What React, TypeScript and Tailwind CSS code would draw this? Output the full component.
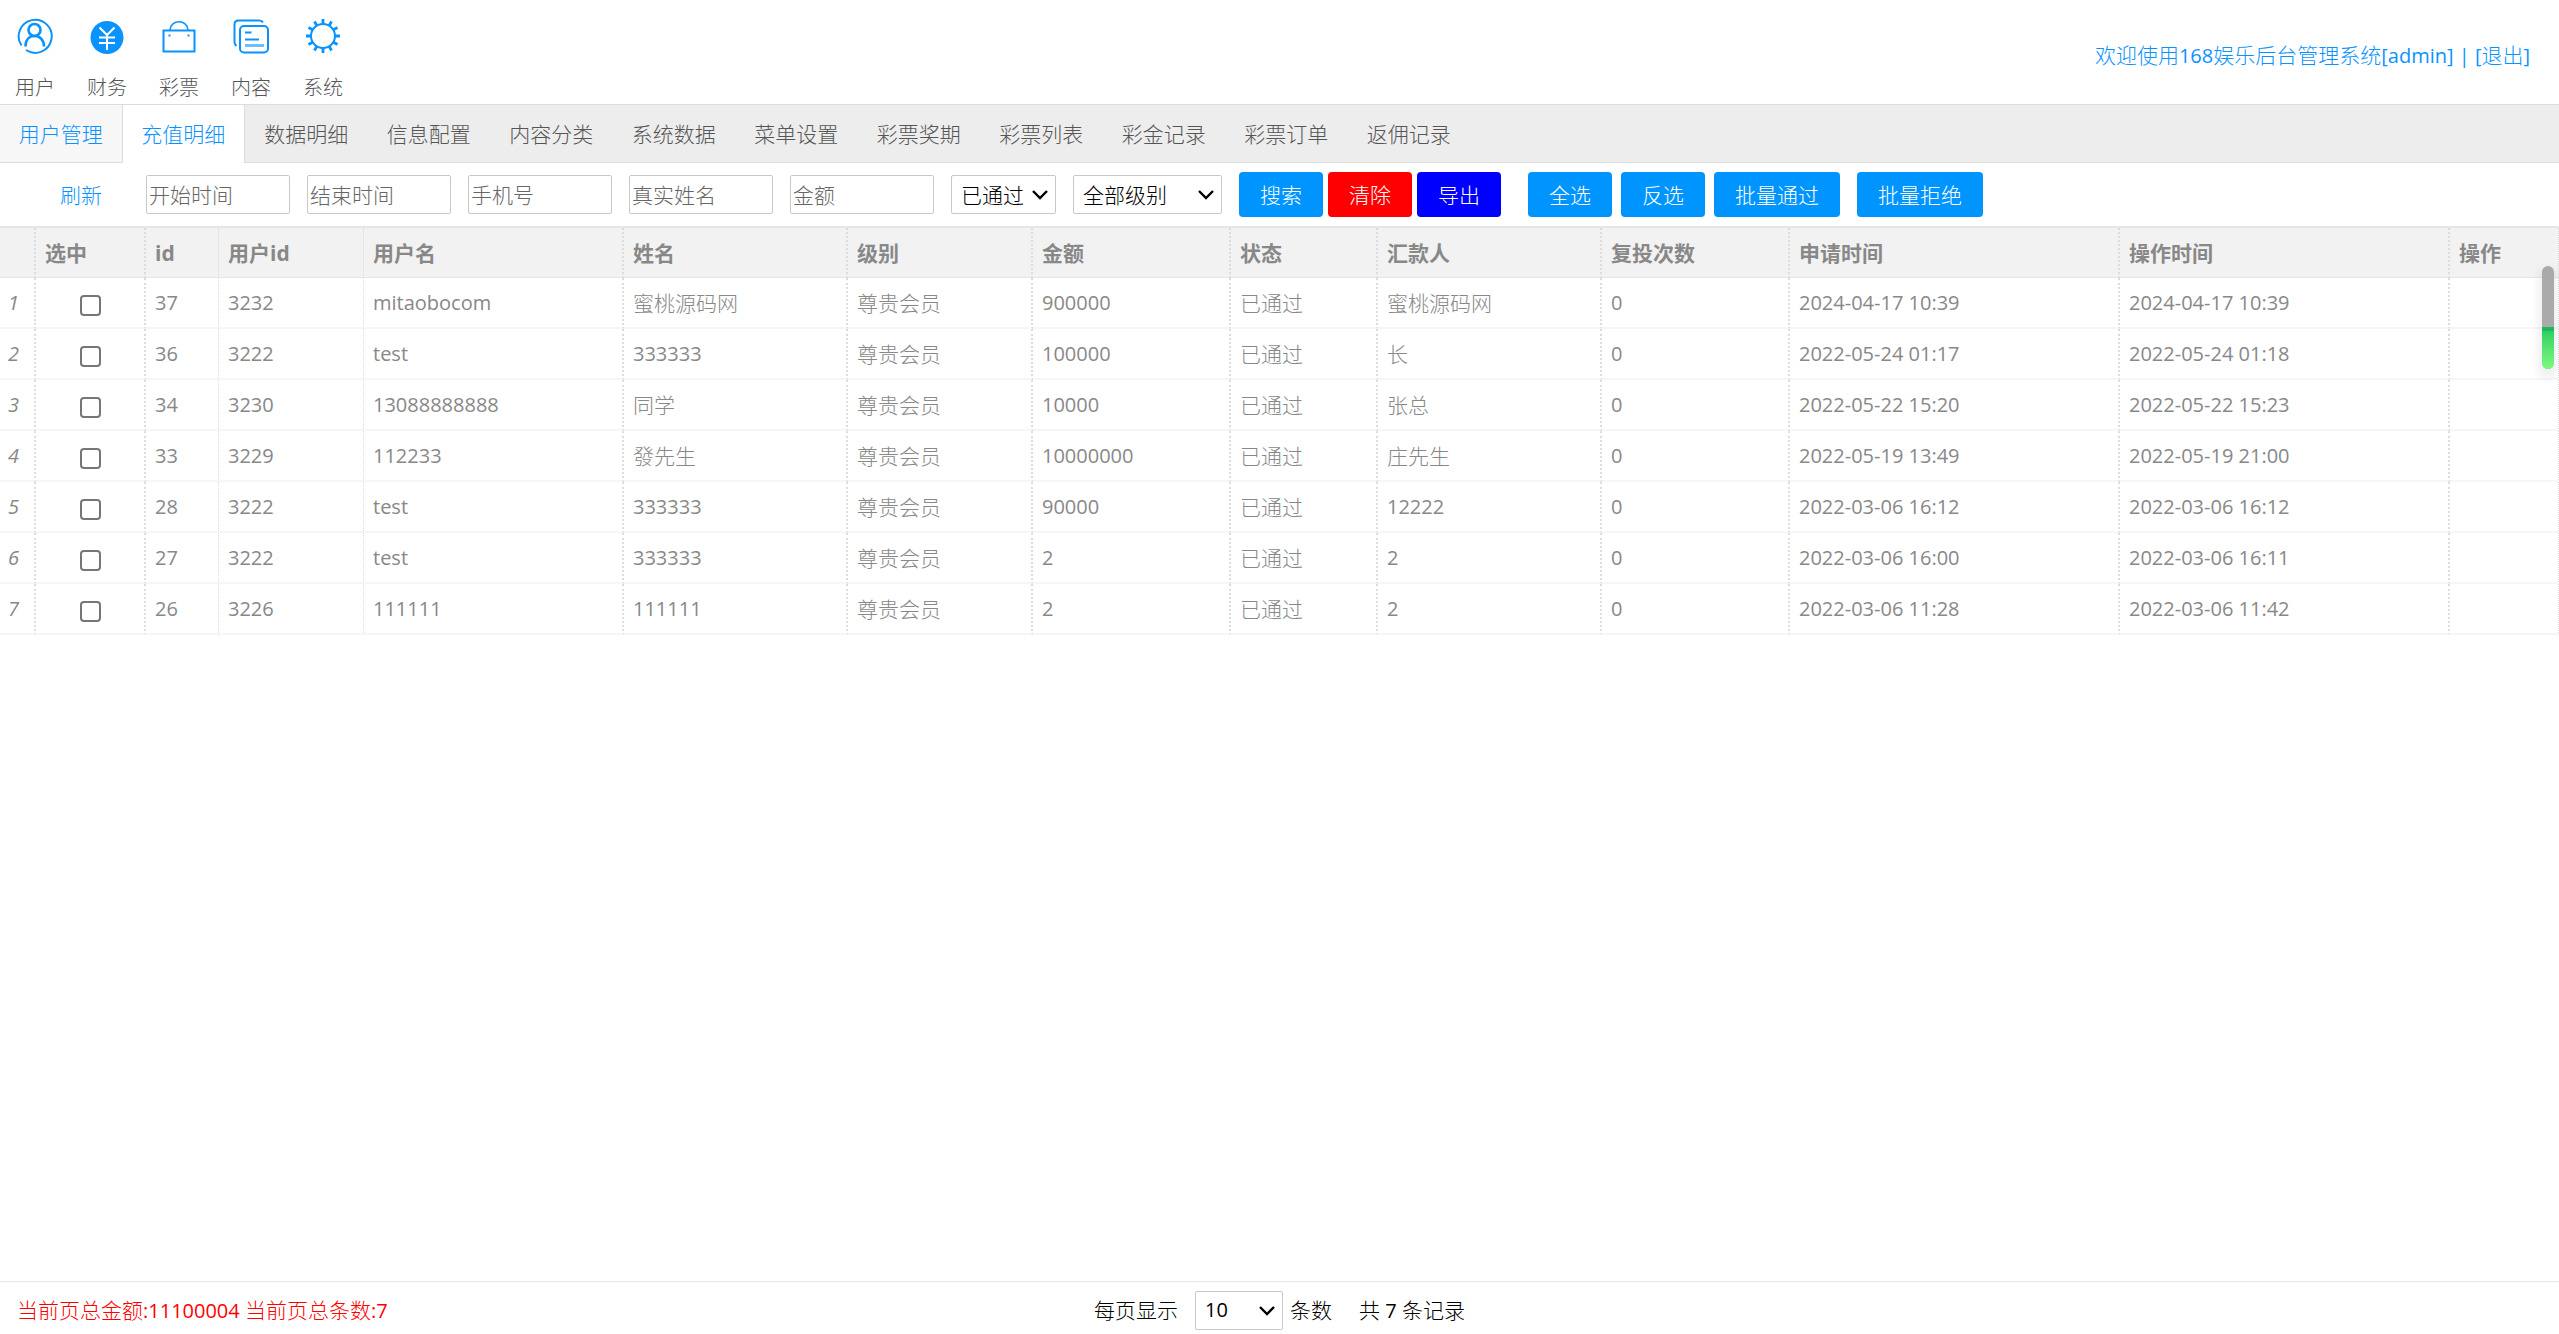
import { useState } from "react";

const NAV_ITEMS = ["用户", "财务", "彩票", "内容", "系统"];

const TABS = [
  "用户管理",
  "充值明细",
  "数据明细",
  "信息配置",
  "内容分类",
  "系统数据",
  "菜单设置",
  "彩票奖期",
  "彩票列表",
  "彩金记录",
  "彩票订单",
  "返佣记录",
];

const FILTERS = ["开始时间", "结束时间", "手机号", "真实姓名", "金额"];

type Column = {
  title: string;
  width: string;
  border: string;
};

const COLUMNS: Column[] = [
  { title: "选中", width: "w-[110px]", border: "border-r-2" },
  { title: "id", width: "w-[73px]", border: "border-r" },
  { title: "用户id", width: "w-[145px]", border: "border-r" },
  { title: "用户名", width: "w-[260px]", border: "border-r-2" },
  { title: "姓名", width: "w-[224px]", border: "border-r-2" },
  { title: "级别", width: "w-[185px]", border: "border-r-2" },
  { title: "金额", width: "w-[198px]", border: "border-r-2" },
  { title: "状态", width: "w-[147px]", border: "border-r-2" },
  { title: "汇款人", width: "w-[224px]", border: "border-r-2" },
  { title: "复投次数", width: "w-[188px]", border: "border-r-2" },
  { title: "申请时间", width: "w-[330px]", border: "border-r-2" },
  { title: "操作时间", width: "w-[330px]", border: "border-r-2" },
  { title: "操作", width: "", border: "border-r" },
];

// id, user id, username, name, level, amount, status, payer, times, applied, handled, actions
const ROWS: string[][] = [
  ["37", "3232", "mitaobocom", "蜜桃源码网", "尊贵会员", "900000", "已通过", "蜜桃源码网", "0", "2024-04-17 10:39", "2024-04-17 10:39", ""],
  ["36", "3222", "test", "333333", "尊贵会员", "100000", "已通过", "长", "0", "2022-05-24 01:17", "2022-05-24 01:18", ""],
  ["34", "3230", "13088888888", "同学", "尊贵会员", "10000", "已通过", "张总", "0", "2022-05-22 15:20", "2022-05-22 15:23", ""],
  ["33", "3229", "112233", "發先生", "尊贵会员", "10000000", "已通过", "庄先生", "0", "2022-05-19 13:49", "2022-05-19 21:00", ""],
  ["28", "3222", "test", "333333", "尊贵会员", "90000", "已通过", "12222", "0", "2022-03-06 16:12", "2022-03-06 16:12", ""],
  ["27", "3222", "test", "333333", "尊贵会员", "2", "已通过", "2", "0", "2022-03-06 16:00", "2022-03-06 16:11", ""],
  ["26", "3226", "111111", "111111", "尊贵会员", "2", "已通过", "2", "0", "2022-03-06 11:28", "2022-03-06 11:42", ""],
];

// Chinese cells are set a little larger and thinner than the numeric ones
function cellText(cell: string) {
  return /[\u4e00-\u9fff]/.test(cell) ? "text-[21px] font-light" : "text-[20px]";
}

function Latin({ children }: { children: string }) {
  return <span className="text-[20px] font-normal">{children}</span>;
}

function NavIcon({ name }: { name: string }) {
  return (
    <svg
      className="size-9"
      viewBox="0 0 36 36"
      fill="none"
      stroke="currentColor"
      strokeWidth="2"
      aria-hidden="true"
    >
      {name === "用户" && (
        <>
          <path d="M4.500 27.500A16.500 16.500 0 1 1 9 32" />
          <circle cx="17.500" cy="12" r="6" strokeWidth="2.600" />
          <path d="M8.500 28.500C8.500 22 12 18 17.500 18S27 22 27 28.500" strokeWidth="2.600" />
        </>
      )}
      {name === "财务" && (
        <>
          <circle cx="18" cy="19.500" r="16.500" fill="currentColor" stroke="none" />
          <path d="M10.500 9.500L18 17L25.500 9.500M10 19.500H26M10 25H26M18 17V32" stroke="#fff" />
        </>
      )}
      {name === "彩票" && (
        <>
          <path d="M2.500 12.500H33.500V33.500H2.500Z" />
          <path d="M9 12C9.500 1 26.500 1 27 12" strokeWidth="1.600" />
          <path d="M7.500 17.500H9.500M26.500 17.500H28.500" />
        </>
      )}
      {name === "内容" && (
        <>
          <path d="M30 4.500Q29 2.500 26 2.500H5.500Q1.500 2.500 1.500 6.500V24Q1.500 26.500 3.500 28" />
          <rect x="7" y="8" width="28" height="26.500" rx="4" />
          <path d="M12 14.500H18.500M12 21.500H26" />
          <path d="M12 27.500H31" strokeWidth="3" opacity=".6" />
        </>
      )}
      {name === "系统" && (
        <>
          <circle cx="18" cy="18" r="12" />
          <path
            d="M18 1V6M18 30V35M1 18H6M30 18H35M9.500 3.500L12 8M26.500 3.500L24 8M9.500 32.500L12 28M26.500 32.500L24 28M3.500 9.500L8 12M32.500 9.500L28 12M3.500 26.500L8 24M32.500 26.500L28 24"
            strokeWidth="2.800"
          />
        </>
      )}
    </svg>
  );
}

type SelectProps = {
  label: string;
  options: string[];
  className: string;
};

function Select({ label, options, className }: SelectProps) {
  return (
    <span className={`relative inline-flex ${className}`}>
      <select
        aria-label={label}
        className="h-[39px] w-full appearance-none rounded-xs border border-[#c8c8c8] bg-white pl-[9px] text-black"
      >
        {options.map((option) => (
          <option key={option}>{option}</option>
        ))}
      </select>
      <svg
        className="pointer-events-none absolute top-3 right-[7px] h-4 w-[18px]"
        viewBox="0 0 18 16"
        fill="none"
        stroke="#000"
        strokeWidth="2.400"
        aria-hidden="true"
      >
        <path d="M2 4L9 11L16 4" />
      </svg>
    </span>
  );
}

type ButtonProps = {
  text: string;
  color?: string;
  className?: string;
};

function Button({ text, color = "bg-[#0094ff]", className = "" }: ButtonProps) {
  return (
    <button
      type="button"
      className={`h-[45px] rounded px-[21px] text-white ${color} ${className}`}
    >
      {text}
    </button>
  );
}

function App() {
  const [activeTab, setActiveTab] = useState("充值明细");
  const [selected, setSelected] = useState<string[]>([]);

  function toggleRow(id: string) {
    setSelected((ids) =>
      ids.includes(id) ? ids.filter((item) => item !== id) : [...ids, id]
    );
  }

  function tabStyle(tab: string, index: number) {
    if (tab === activeTab) return "border-r border-[#dcdcdc] bg-white text-[#0a93ff]";
    if (index === 0)
      return "border-r border-b border-[#dcdcdc] bg-[#f7f7f7] text-[#0a93ff]";
    return "border-b border-[#dcdcdc] text-[#555]";
  }

  return (
    <div className="flex min-h-screen flex-col bg-white font-['Open_Sans','Noto_Sans_CJK_SC',sans-serif] text-[21px] leading-7 font-light whitespace-nowrap">
      <header className="flex h-[104px] items-start justify-between pr-[29px] pl-3.5">
        <nav className="flex gap-[30px] pt-[18px]">
          {NAV_ITEMS.map((item) => (
            <a
              href="#"
              key={item}
              className="flex w-[42px] flex-col items-center gap-5 text-[#0a93ff]"
            >
              <NavIcon name={item} />
              <span className="text-[20px] text-[#555]">{item}</span>
            </a>
          ))}
        </nav>
        <p className="pt-[41px] text-[#0a93ff]">
          欢迎使用<Latin>168</Latin>娱乐后台管理系统<Latin>[admin] | </Latin>
          <a href="#">
            <Latin>[</Latin>退出<Latin>]</Latin>
          </a>
        </p>
      </header>

      <div className="flex h-[59px] border-t border-[#dcdcdc] bg-[#ededed]">
        <div className="grid w-[1470px] grid-cols-12">
          {TABS.map((tab, index) => (
            <button
              type="button"
              key={tab}
              onClick={() => setActiveTab(tab)}
              className={tabStyle(tab, index)}
            >
              {tab}
            </button>
          ))}
        </div>
        <div className="flex-1 border-b border-[#dcdcdc]"></div>
      </div>

      <div className="flex h-[63px] items-center">
        <a href="#" className="w-[146px] pl-[60px] text-[#0a93ff]">
          刷新
        </a>
        <div className="flex gap-[17px]">
          {FILTERS.map((filter) => (
            <input
              type="text"
              key={filter}
              aria-label={filter}
              placeholder={filter}
              className="h-[39px] w-36 rounded-xs border border-[#c8c8c8] px-0.5 placeholder:text-[#666]"
            />
          ))}
          <Select label="状态" options={["已通过", "未通过"]} className="w-[105px]" />
          <Select label="级别" options={["全部级别", "尊贵会员"]} className="w-[149px]" />
        </div>
        <div className="ml-[17px] flex gap-[5px]">
          <Button text="搜索" />
          <Button text="清除" color="bg-[#ff0000]" />
          <Button text="导出" color="bg-[#0000ff]" />
        </div>
        <div className="ml-[27px] flex gap-[9px]">
          <Button text="全选" />
          <Button text="反选" />
          <Button text="批量通过" />
          <Button text="批量拒绝" className="ml-2" />
        </div>
      </div>

      <main className="relative flex-1 border-t-2 border-[#e6e6e6]">
        <table className="w-full table-fixed border-separate border-spacing-0 text-[#888]">
          <thead className="bg-[#f2f2f2]">
            <tr className="h-[50px] text-left">
              <th className="w-9 border-r-2 border-b border-r-[#dcdcdc] border-b-[#e6e6e6] [border-right-style:dotted]"></th>
              {COLUMNS.map((column) => (
                <th
                  key={column.title}
                  className={`border-b border-r-[#dcdcdc] border-b-[#e6e6e6] p-0 pl-[9px] [border-right-style:dotted] ${column.width} ${column.border}`}
                >
                  {column.title}
                </th>
              ))}
            </tr>
          </thead>
          <tbody className="text-[20px] font-normal">
            {ROWS.map((row, index) => (
              <tr key={row[0]} className="h-[51px]">
                <td className="border-r-2 border-b-2 border-r-[#dcdcdc] border-b-[#f6f6f6] p-0 pt-px pl-2 italic [border-right-style:dotted]">
                  {index + 1}
                </td>
                <td className="border-r-2 border-b-2 border-r-[#dcdcdc] border-b-[#f6f6f6] p-0 [border-right-style:dotted]">
                  <input
                    type="checkbox"
                    aria-label={`选中 ${row[0]}`}
                    checked={selected.includes(row[0])}
                    onChange={() => toggleRow(row[0])}
                    className="mx-auto mt-[5px] block size-[21px] appearance-none rounded border-2 border-[#767676] checked:border-[#0075ff] checked:bg-[#0075ff]"
                  />
                </td>
                {row.map((cell, i) => (
                  <td
                    key={COLUMNS[i + 1].title}
                    className={`border-b-2 border-r-[#dcdcdc] border-b-[#f6f6f6] p-0 pt-px pl-[9px] [border-right-style:dotted] ${COLUMNS[i + 1].border} ${cellText(cell)}`}
                  >
                    {cell}
                  </td>
                ))}
              </tr>
            ))}
          </tbody>
        </table>

        <div className="absolute top-[38px] right-[5px] h-[103px] w-3 overflow-hidden rounded-full bg-[#aaa] shadow-[0_6px_10px_4px_#00000010]">
          <div className="mt-[61px] h-[42px] border-t-4 border-[#1db954] bg-linear-to-b from-[#2bd066] to-[#7dfa80]"></div>
        </div>
      </main>

      <footer className="grid h-[53px] grid-cols-[1fr_auto_1fr] items-center border-t border-[#e6e6e6] pt-1">
        <p className="pl-[17px] text-[#ff0000]">
          当前页总金额<Latin>:11100004 </Latin>当前页总条数<Latin>:7</Latin>
        </p>
        <div className="flex items-center text-black">
          <span>每页显示</span>
          <Select
            label="每页显示"
            options={["10", "20", "50"]}
            className="mr-[7px] ml-[17px] w-[88px] text-[20px] font-normal"
          />
          <span>条数</span>
          <span className="ml-[27px]">
            共<Latin> 7 </Latin>条记录
          </span>
        </div>
      </footer>
    </div>
  );
}

export default App;
